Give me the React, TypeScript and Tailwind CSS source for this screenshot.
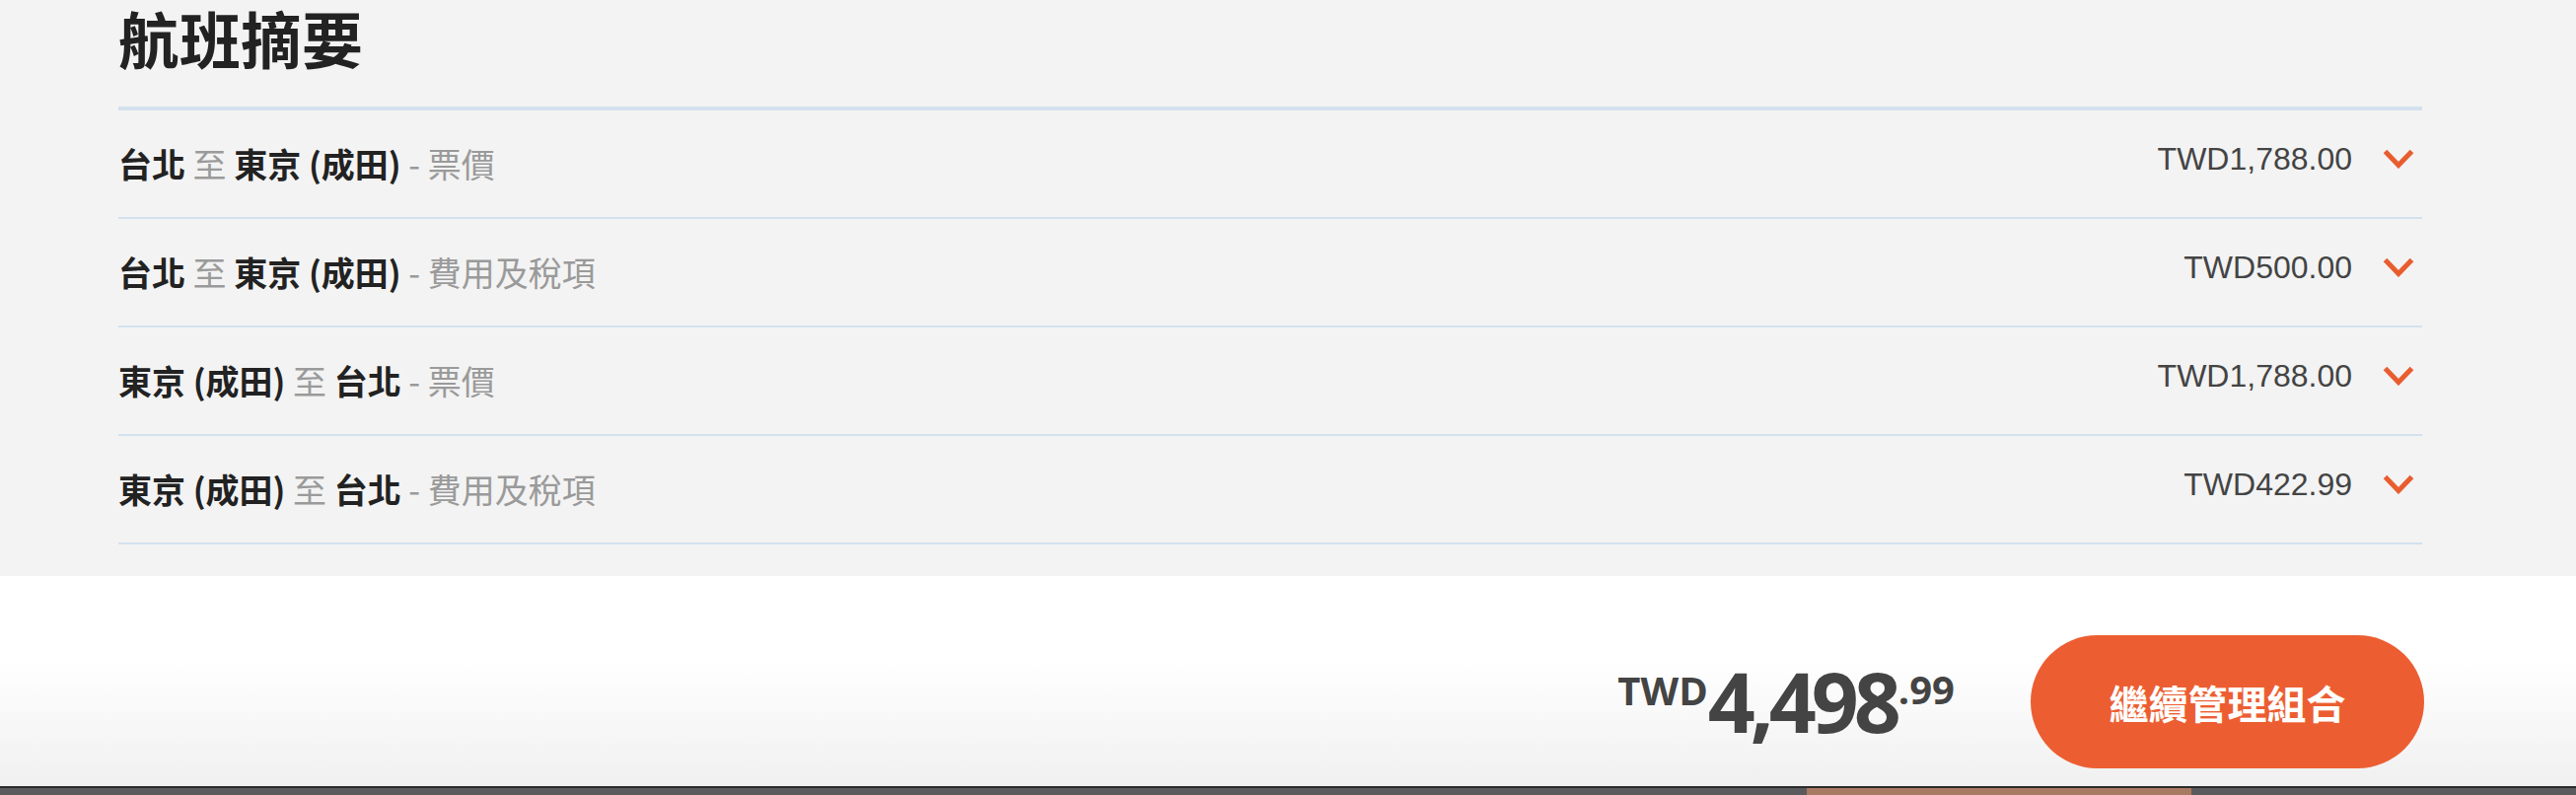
const rows = [
  { from: "台北", to: "東京 (成田)", kind: "票價", price: "TWD1,788.00" },
  { from: "台北", to: "東京 (成田)", kind: "費用及稅項", price: "TWD500.00" },
  { from: "東京 (成田)", to: "台北", kind: "票價", price: "TWD1,788.00" },
  { from: "東京 (成田)", to: "台北", kind: "費用及稅項", price: "TWD422.99" },
];

function Chevron() {
  return (
    <svg width="32" height="20" viewBox="0 0 32 20" fill="none">
      <path d="M2.5 2.5 L16 16.5 L29.5 2.5" stroke="#e85d2f" strokeWidth="5" />
    </svg>
  );
}

export default function App() {
  return (
    <div className="w-[2612px] h-[806px] flex flex-col overflow-hidden font-['Noto_Sans_CJK_TC',sans-serif]">
      <div className="h-[584px] bg-[#f3f3f3] pl-[120px]">
        <div className="w-[2336px]">
          <h1 className="h-[108px] pt-[2px] text-[62px] leading-[72px] font-bold text-[#222]">航班摘要</h1>
          <div className="border-t-4 border-[#d3e1ee]">
            {rows.map((r, i) => (
              <div key={i} className="h-[110px] border-b-2 border-[#d3e1ee] flex items-center justify-between">
                <div className="text-[34px] leading-none">
                  <span className="font-bold text-[#222]">{r.from}</span>
                  <span className="text-[#9a9a9a]"> 至 </span>
                  <span className="font-bold text-[#222]">{r.to}</span>
                  <span className="text-[#9a9a9a]"> - {r.kind}</span>
                </div>
                <div className="flex items-center gap-[31px] pr-[8px] pb-[10px]">
                  <span className="font-['Liberation_Sans',sans-serif] text-[32px] leading-none text-[#444]">{r.price}</span>
                  <Chevron />
                </div>
              </div>
            ))}
          </div>
        </div>
      </div>
      <div className="flex-1 bg-gradient-to-b from-white from-40% to-[#f0f0f0] flex justify-end items-start pt-[60px] pr-[154px]">
        <div className="flex items-start text-[#444] font-['Open_Sans',sans-serif] font-bold leading-none mt-[25px]">
          <span className="text-[40px] mt-[11px]">TWD</span>
          <span className="text-[84px] tracking-[-5px]">4,498</span>
          <span className="text-[40px] mt-[10px] ml-[2px]">.99</span>
        </div>
        <button className="ml-[77px] w-[399px] h-[135px] rounded-full bg-[#ec5e31] text-white text-[40px] font-bold">
          繼續管理組合
        </button>
      </div>
      <div className="h-[2px] bg-[#2a2a2a]"></div>
      <div className="h-[7px] bg-[#5a5a5c] flex">
        <div className="w-[1832px]"></div>
        <div className="w-[390px] bg-[#a97a62]"></div>
      </div>
    </div>
  );
}
